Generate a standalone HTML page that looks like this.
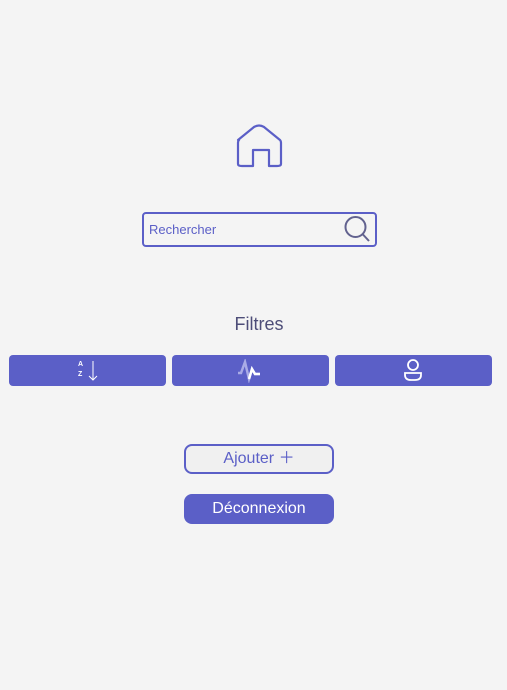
<!DOCTYPE html><html><head><style>
body{margin:0;width:507px;height:690px;background:#f4f4f4;font-family:"Liberation Sans",sans-serif;position:relative;overflow:hidden}
.a{position:absolute;box-sizing:border-box}
.fb{background:#5b5fc7;border-radius:4px;top:355px;height:31px;width:157px}
</style></head><body>
<svg class="a" style="left:235px;top:123px" width="48" height="48" viewBox="0 0 48 48"><path d="M3 17 L19 4 Q24 1 29 4 L45 17 Q46 18 46 20 V41 Q46 43 42 43 H34 V27 H18 V43 H7 Q3 43 3 41 V20 Q3 18 4 17Z" fill="none" stroke="#5b5fc7" stroke-width="2.2" stroke-linejoin="round"/></svg>
<div class="a" style="left:142px;top:212px;width:235px;height:35px;border:2px solid #5b5fc7;border-radius:4px"></div>
<div class="a" style="left:149px;top:222px;font-size:13px;color:#5b5fc7">Rechercher</div>
<svg class="a" style="left:343px;top:214px" width="30" height="30" viewBox="0 0 30 30"><circle cx="12.5" cy="13" r="10" fill="none" stroke="#62628f" stroke-width="2"/><line x1="19.5" y1="20" x2="26" y2="27" stroke="#62628f" stroke-width="2"/></svg>
<div class="a" style="left:0;width:518px;top:314px;text-align:center;font-size:18px;color:#4d4d78">Filtres</div>
<div class="a fb" style="left:9px"></div>
<div class="a fb" style="left:172px"></div>
<div class="a fb" style="left:335px"></div>
<div class="a" style="left:78px;top:360px;font-size:7px;color:#fff;line-height:10px;font-weight:bold">A<br>Z</div>
<svg class="a" style="left:88px;top:360px" width="10" height="22"><path d="M5 1V20M1 16L5 20L9 16" fill="none" stroke="#fff" stroke-width="1"/></svg>
<svg class="a" style="left:237px;top:359px" width="28" height="24"><path d="M1 14H4L8 3L12 20L15 10L18 15H23" fill="none" stroke="#a9abe6" stroke-width="2.5"/><path d="M12 20L15 10L18 15H23" fill="none" stroke="#fff" stroke-width="2.5"/></svg>
<svg class="a" style="left:402px;top:359px" width="22" height="24"><circle cx="11" cy="6" r="5" fill="none" stroke="#fff" stroke-width="1.8"/><path d="M3 14H19V16Q19 21 13 21H9Q3 21 3 16Z" fill="none" stroke="#fff" stroke-width="1.8"/></svg>
<div class="a" style="left:184px;top:444px;width:150px;height:30px;border:2px solid #5b5fc7;border-radius:8px;background:#f0f0f0;text-align:center;font-size:16px;line-height:26px;color:#5b5fc7">Ajouter ＋</div>
<div class="a" style="left:184px;top:494px;width:150px;height:30px;border-radius:8px;background:#5b5fc7;text-align:center;font-size:16px;line-height:30px;color:#fff">Déconnexion</div>
</body></html>
